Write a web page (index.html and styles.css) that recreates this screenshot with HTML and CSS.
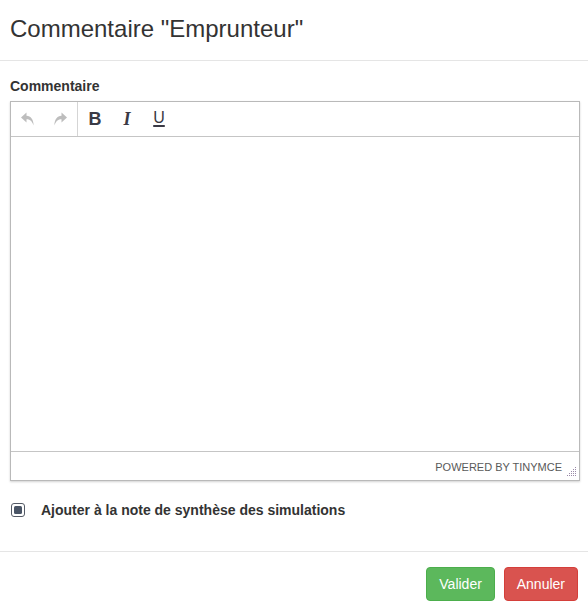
FILE: index.html
```html
<!DOCTYPE html>
<html lang="fr">
<head>
<meta charset="utf-8">
<title>Commentaire</title>
<link rel="stylesheet" href="styles.css">
</head>
<body>
<div class="modal">
  <div class="modal-header">
    <h4 class="modal-title">Commentaire "Emprunteur"</h4>
  </div>
  <div class="modal-body">
    <label class="field-label">Commentaire</label>
    <div class="editor">
      <div class="toolbar">
        <div class="group">
          <span class="tbtn disabled">
            <svg width="16" height="16" viewBox="0 0 16 16"><path d="M6.5 1.5 L1 6.5 L6.5 11.5 V8.3 C9.6 8.3 11.8 9.6 13.6 14.5 C13.6 8.6 10.8 4.8 6.5 4.8 Z" fill="#bdbdbd"/></svg>
          </span>
          <span class="tbtn disabled">
            <svg width="16" height="16" viewBox="0 0 16 16"><path d="M9.5 1.5 L15 6.5 L9.5 11.5 V8.3 C6.4 8.3 4.2 9.6 2.4 14.5 C2.4 8.6 5.2 4.8 9.5 4.8 Z" fill="#bdbdbd"/></svg>
          </span>
        </div>
        <div class="group sep">
          <span class="tbtn"><span class="ico-b">B</span></span>
          <span class="tbtn"><span class="ico-i">I</span></span>
          <span class="tbtn"><span class="ico-u">U</span></span>
        </div>
      </div>
      <div class="edit-area"></div>
      <div class="statusbar">
        <span class="branding">Powered by TinyMCE</span>
        <svg class="resize" width="10" height="10" viewBox="0 0 10 10">
          <g fill="#9a8aa8">
            <rect x="8" y="0" width="1" height="1"/>
            <rect x="6" y="2" width="1" height="1"/><rect x="8" y="2" width="1" height="1"/>
            <rect x="4" y="4" width="1" height="1"/><rect x="6" y="4" width="1" height="1"/><rect x="8" y="4" width="1" height="1"/>
            <rect x="2" y="6" width="1" height="1"/><rect x="4" y="6" width="1" height="1"/><rect x="6" y="6" width="1" height="1"/><rect x="8" y="6" width="1" height="1"/>
            <rect x="0" y="8" width="1" height="1"/><rect x="2" y="8" width="1" height="1"/><rect x="4" y="8" width="1" height="1"/><rect x="6" y="8" width="1" height="1"/><rect x="8" y="8" width="1" height="1"/>
          </g>
        </svg>
      </div>
    </div>
    <div class="check-row">
      <span class="checkbox"><span class="check-fill"></span></span>
      <span class="check-label">Ajouter à la note de synthèse des simulations</span>
    </div>
  </div>
  <div class="modal-footer">
    <button class="btn btn-success">Valider</button>
    <button class="btn btn-danger">Annuler</button>
  </div>
</div>
</body>
</html>
```

FILE: styles.css
```css
html, body {
  margin: 0;
  padding: 0;
  background: #fff;
}
body {
  font-family: "Liberation Sans", Arial, Helvetica, sans-serif;
  font-size: 14px;
  line-height: 20px;
  color: #333;
}
.modal {
  width: 588px;
}
.modal-header {
  padding: 13px 10px 15px;
  border-bottom: 1px solid #e5e5e5;
}
.modal-title {
  margin: 0;
  font-size: 24px;
  line-height: 32px;
  font-weight: normal;
  color: #333;
}
.modal-body {
  padding: 15px 8px 31px 10px;
}
.field-label {
  display: block;
  font-weight: bold;
  margin-bottom: 5px;
}
.editor {
  border: 1px solid #b9b9b9;
  box-shadow: 0 1px 2px rgba(0, 0, 0, 0.18);
  background: #fff;
}
.toolbar {
  display: flex;
  height: 34px;
  padding-left: 1px;
  border-bottom: 1px solid #c5c5c5;
}
.group {
  display: flex;
  padding-right: 1px;
}
.group.sep {
  border-left: 1px solid #d5d5d5;
  padding-left: 1px;
}
.tbtn {
  width: 32px;
  height: 34px;
  display: flex;
  align-items: center;
  justify-content: center;
}
.ico-b {
  font-family: "Liberation Sans", Arial, sans-serif;
  font-weight: bold;
  font-size: 18px;
  color: #3a3a45;
  line-height: 1;
}
.ico-i {
  font-family: "Liberation Serif", "Times New Roman", serif;
  font-style: italic;
  font-weight: bold;
  font-size: 18px;
  color: #3a3a45;
  line-height: 1;
}
.ico-u {
  font-family: "Liberation Sans", Arial, sans-serif;
  font-size: 16px;
  color: #3a3a45;
  line-height: 1;
  margin-top: -2px;
  text-decoration: underline;
  text-decoration-thickness: 2px;
  text-underline-offset: 2px;
}
.edit-area {
  height: 314px;
}
.statusbar {
  height: 28px;
  border-top: 1px solid #c5c5c5;
  display: flex;
  align-items: center;
  justify-content: flex-end;
  position: relative;
  padding-right: 17px;
}
.branding {
  font-size: 11px;
  text-transform: uppercase;
  color: #595959;
  line-height: 14px;
  margin-top: 1px;
}
.resize {
  position: absolute;
  right: 2px;
  bottom: 3px;
}
.check-row {
  display: flex;
  align-items: center;
  margin-top: 19px;
  height: 20px;
}
.checkbox {
  box-sizing: border-box;
  width: 14px;
  height: 14px;
  margin-left: 1px;
  margin-top: -1px;
  border: 1.5px solid #555b66;
  border-radius: 3px;
  display: flex;
  align-items: center;
  justify-content: center;
}
.check-fill {
  width: 8px;
  height: 8px;
  border-radius: 1.5px;
  background: #4a5566;
}
.check-label {
  font-weight: bold;
  margin-left: 16px;
}
.modal-footer {
  border-top: 1px solid #e5e5e5;
  padding: 15px 10px 15px 15px;
  text-align: right;
}
.btn {
  font-family: "Liberation Sans", Arial, Helvetica, sans-serif;
  font-size: 14px;
  line-height: 20px;
  padding: 6px 12px;
  border: 1px solid transparent;
  border-radius: 4px;
  color: #fff;
  cursor: pointer;
}
.btn + .btn {
  margin-left: 5px;
}
.btn-success {
  background: #5cb85c;
  border-color: #4cae4c;
}
.btn-danger {
  background: #d9534f;
  border-color: #d43f3a;
}
```
